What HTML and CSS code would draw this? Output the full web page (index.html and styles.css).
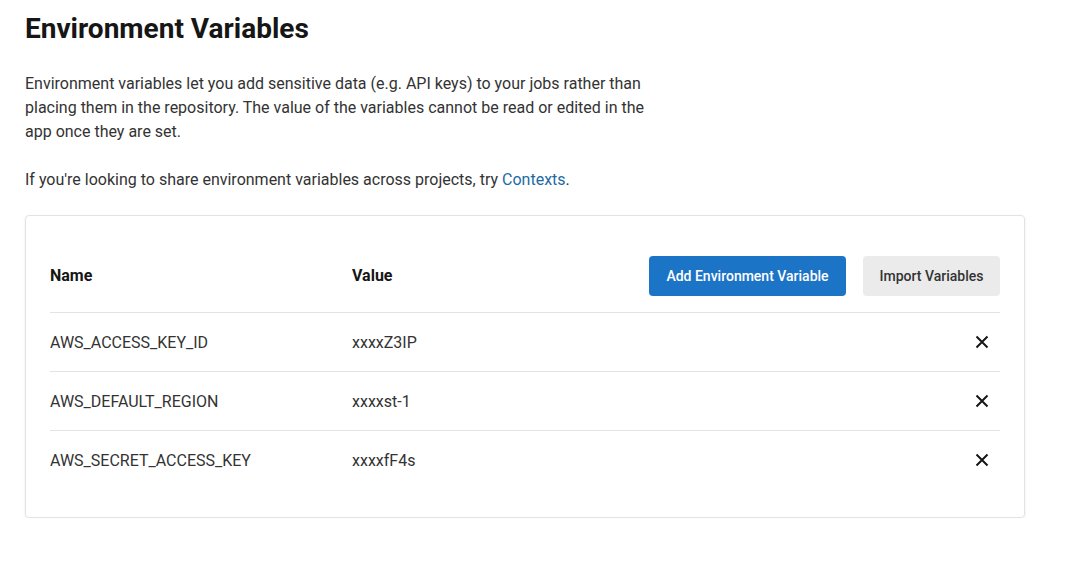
FILE: index.html
```html
<!DOCTYPE html>
<html>
<head>
<meta charset="utf-8">
<link rel="stylesheet" href="styles.css">
</head>
<body>
<main class="page">
  <h1 class="title">Environment Variables</h1>
  <p class="desc">Environment variables let you add sensitive data (e.g. API keys) to your jobs rather than placing them in the repository. The value of the variables cannot be read or edited in the app once they are set.</p>
  <p class="desc">If you're looking to share environment variables across projects, try <a class="link" href="#">Contexts</a>.</p>
  <section class="card">
    <div class="row head">
      <div class="col-name">Name</div>
      <div class="col-value">Value</div>
      <div class="actions">
        <button class="btn btn-primary">Add Environment Variable</button>
        <button class="btn btn-secondary">Import Variables</button>
      </div>
    </div>
    <div class="row">
      <div class="col-name">AWS_ACCESS_KEY_ID</div>
      <div class="col-value">xxxxZ3IP</div>
      <button class="del" aria-label="Delete"><svg width="14" height="14" viewBox="0 0 14 14"><path d="M1.5 1.5L12.5 12.5M12.5 1.5L1.5 12.5" stroke="#161616" stroke-width="2" fill="none"/></svg></button>
    </div>
    <div class="row">
      <div class="col-name">AWS_DEFAULT_REGION</div>
      <div class="col-value">xxxxst-1</div>
      <button class="del" aria-label="Delete"><svg width="14" height="14" viewBox="0 0 14 14"><path d="M1.5 1.5L12.5 12.5M12.5 1.5L1.5 12.5" stroke="#161616" stroke-width="2" fill="none"/></svg></button>
    </div>
    <div class="row last">
      <div class="col-name">AWS_SECRET_ACCESS_KEY</div>
      <div class="col-value">xxxxfF4s</div>
      <button class="del" aria-label="Delete"><svg width="14" height="14" viewBox="0 0 14 14"><path d="M1.5 1.5L12.5 12.5M12.5 1.5L1.5 12.5" stroke="#161616" stroke-width="2" fill="none"/></svg></button>
    </div>
  </section>
</main>
</body>
</html>
```

FILE: styles.css
```css
* { box-sizing: border-box; }
html, body { margin: 0; background: #fff; }
body { font-family: Roboto, "Noto Sans", sans-serif; color: #333; }
.page { padding: 12px 44px 0 25px; }
.title { margin: 0; font-size: 28px; line-height: 34px; font-weight: 700; color: #161616; }
.desc { margin: 26px 0 0; width: 630px; font-size: 16px; line-height: 24px; color: #333; }
.desc + .desc { margin-top: 24px; }
.link { color: #1d6aa5; text-decoration: none; }
.card { margin-top: 23px; width: 1000px; border: 1px solid #e3e3e3; border-radius: 4px; box-shadow: 0 1px 3px rgba(0,0,0,0.08); padding: 0 24px 28px; }
.row { display: flex; align-items: center; height: 59px; border-bottom: 1px solid #e3e3e3; font-size: 16px; color: #333; }
.row.last { border-bottom: none; height: 58px; }
.row.head { height: 97px; padding-top: 23px; font-weight: 700; color: #161616; }
.col-name { width: 302px; }
.col-value { flex: 1; }
.actions { display: flex; gap: 17px; }
.btn { font-family: Roboto, sans-serif; font-size: 14px; font-weight: 500; height: 40px; border: none; border-radius: 4px; padding: 0 16px; cursor: pointer; }
.btn-primary { background: #1c74c7; color: #fff; width: 197px; }
.btn-secondary { background: #ebebeb; color: #333; width: 137px; }
.del { border: none; background: none; padding: 0; width: 36px; height: 36px; display: flex; align-items: center; justify-content: center; }
```
